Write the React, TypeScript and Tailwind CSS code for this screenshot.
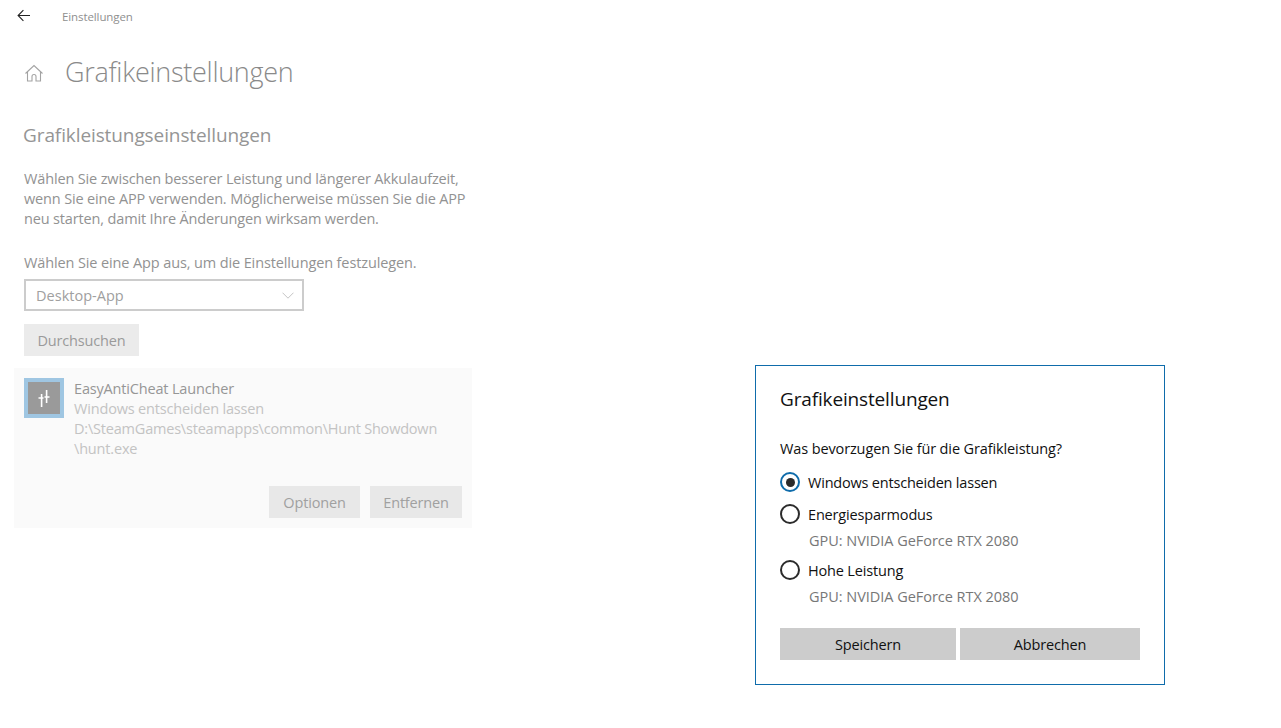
import React from "react";

const font = { fontFamily: '"Open Sans", "Noto Sans", sans-serif' };

function Radio({ checked }: { checked?: boolean }) {
  return (
    <span className={`flex h-[20px] w-[20px] shrink-0 items-center justify-center rounded-full border-2 ${checked ? "border-[#0f6cab]" : "border-[#2b2b2b]"}`}>
      {checked && <span className="h-[9px] w-[9px] rounded-full bg-[#2b2b2b]" />}
    </span>
  );
}

export default function App() {
  return (
    <div className="relative h-[728px] w-[1281px] overflow-hidden bg-white" style={font}>
      <div className="flex h-[32px] items-center pl-[17px]">
        <svg width="14" height="14" viewBox="0 0 14 14" fill="none" stroke="#222" strokeWidth="1.1">
          <path d="M13 6.5H1.2M6.4 1.2 1.1 6.5l5.3 5.3" />
        </svg>
        <span className="ml-[31px] pt-[2px] text-[11.5px] tracking-[-0.1px] text-[#8f8f8f]">Einstellungen</span>
      </div>

      <div className="mt-[21px] flex h-[40px] items-center pl-[24px]">
        <svg width="20" height="20" viewBox="0 0 20 20" fill="none" stroke="#a3a3a3" strokeWidth="1.1">
          <path d="M1.5 10.5 10 2.5l8.5 8M3.5 8.5V18H8v-4.5a2 2 0 0 1 4 0V18h4.5V8.5" />
        </svg>
        <h1 className="ml-[21px] pb-[3px] text-[27px] font-light leading-[36px] tracking-[-0.28px] text-[#8a8a8a]">Grafikeinstellungen</h1>
      </div>

      <h2 className="mt-[29px] pl-[23px] text-[19px] leading-[26px] tracking-[-0.1px] text-[#959595]">Grafikleistungseinstellungen</h2>

      <p className="mt-[21px] w-[470px] pl-[24px] text-[14.5px] leading-[20px] tracking-[-0.15px] text-[#929292]">
        Wählen Sie zwischen besserer Leistung und längerer Akkulaufzeit,
        <br />
        wenn Sie eine APP verwenden. Möglicherweise müssen Sie die APP
        <br />
        neu starten, damit Ihre Änderungen wirksam werden.
      </p>

      <p className="mt-[24px] pl-[24px] text-[14.5px] leading-[20px] tracking-[-0.12px] text-[#929292]">Wählen Sie eine App aus, um die Einstellungen festzulegen.</p>

      <div className="ml-[24px] mt-[6px] flex h-[32px] w-[280px] items-center justify-between border-2 border-[#cccccc] pl-[10px] pr-[8px]">
        <span className="pt-[2px] text-[14.5px] tracking-[0.02px] text-[#a0a0a0]">Desktop-App</span>
        <svg width="12" height="7" viewBox="0 0 12 7" fill="none" stroke="#c4c4c4" strokeWidth="1">
          <path d="M.5.7 6 6.2 11.5.7" />
        </svg>
      </div>

      <div className="ml-[24px] mt-[13px] flex h-[32px] w-[115px] items-center justify-center bg-[#ebebeb] pt-[2px] text-[14.5px] tracking-[-0.17px] text-[#9a9a9a]">Durchsuchen</div>

      <div className="ml-[14px] mt-[12px] h-[160px] w-[458px] bg-[#fafafa] pl-[10px] pt-[10px]">
        <div className="flex">
          <div className="flex h-[40px] w-[40px] shrink-0 items-center justify-center bg-[#9fc6e2]">
            <div className="flex h-[32px] w-[32px] items-center justify-center bg-[#9a9a9a]">
              <svg width="14" height="18" viewBox="0 0 14 18" fill="none" stroke="#fff" strokeWidth="1.6">
                <path d="M4.6 5v13M9.6 1v13M1.5 9h5M7.5 8h5" />
              </svg>
            </div>
          </div>
          <div className="ml-[10px] mt-[1px] text-[14.5px] leading-[20px] tracking-[-0.17px]">
            <div className="text-[#969696]">EasyAntiCheat Launcher</div>
            <div className="text-[#c3c3c3]">Windows entscheiden lassen</div>
            <div className="tracking-[-0.2px] text-[#c3c3c3]">D:\SteamGames\steamapps\common\Hunt Showdown</div>
            <div className="text-[#c3c3c3]">\hunt.exe</div>
          </div>
        </div>
        <div className="mt-[27px] flex justify-end gap-[10px] pr-[10px]">
          <div className="flex h-[32px] w-[91px] items-center justify-center bg-[#e8e8e8] pt-[2px] text-[14.5px] tracking-[-0.17px] text-[#a0a0a0]">Optionen</div>
          <div className="flex h-[32px] w-[92px] items-center justify-center bg-[#e8e8e8] pt-[2px] text-[14.5px] tracking-[-0.17px] text-[#a0a0a0]">Entfernen</div>
        </div>
      </div>

      <div className="absolute left-[755px] top-[365px] h-[320px] w-[410px] border border-[#0f6cab] bg-white px-[24px]">
        <h3 className="mt-[20px] text-[19px] leading-[26px] tracking-[-0.15px] text-[#111]">Grafikeinstellungen</h3>
        <p className="mt-[27px] text-[14.5px] leading-[20px] tracking-[-0.12px] text-[#111]">Was bevorzugen Sie für die Grafikleistung?</p>
        <div className="mt-[12px] flex h-[22px] items-center gap-[8px]">
          <Radio checked />
          <span className="pt-[2px] text-[14.5px] tracking-[-0.2px] text-[#111]">Windows entscheiden lassen</span>
        </div>
        <div className="mt-[10px] flex h-[22px] items-center gap-[8px]">
          <Radio />
          <span className="pt-[2px] text-[14.5px] tracking-[-0.17px] text-[#111]">Energiesparmodus</span>
        </div>
        <div className="mt-[6px] pl-[29px] text-[14.5px] leading-[20px] tracking-[-0.03px] text-[#777]">GPU: NVIDIA GeForce RTX 2080</div>
        <div className="mt-[8px] flex h-[22px] items-center gap-[8px]">
          <Radio />
          <span className="pt-[2px] text-[14.5px] tracking-[-0.17px] text-[#111]">Hohe Leistung</span>
        </div>
        <div className="mt-[6px] pl-[29px] text-[14.5px] leading-[20px] tracking-[-0.03px] text-[#777]">GPU: NVIDIA GeForce RTX 2080</div>
        <div className="mt-[21px] flex gap-[4px]">
          <div className="flex h-[32px] w-[176px] items-center justify-center bg-[#cccccc] pt-[2px] text-[14.5px] tracking-[-0.17px] text-[#111]">Speichern</div>
          <div className="flex h-[32px] w-[180px] items-center justify-center bg-[#cccccc] pt-[2px] text-[14.5px] tracking-[-0.17px] text-[#111]">Abbrechen</div>
        </div>
      </div>
    </div>
  );
}
